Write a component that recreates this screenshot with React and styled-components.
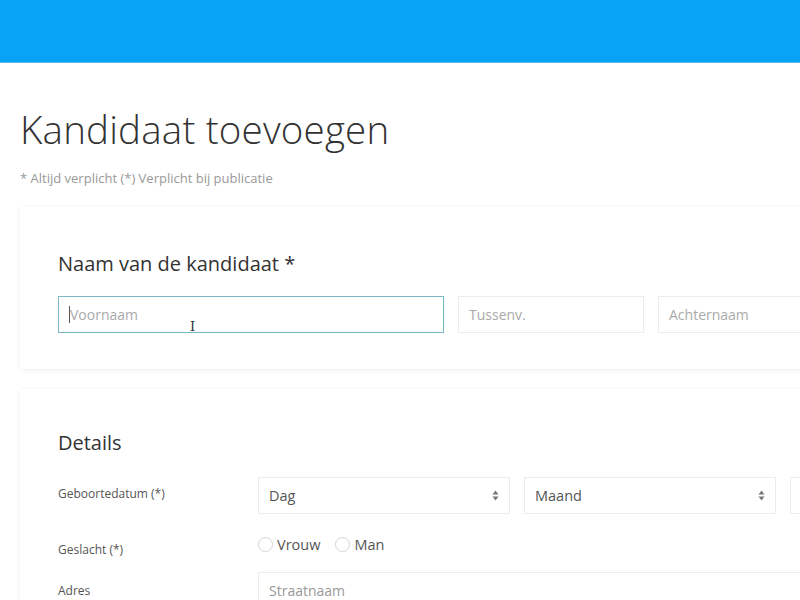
import React from 'react';
import styled, { createGlobalStyle } from 'styled-components';

const GlobalStyle = createGlobalStyle`
  html, body {
    margin: 0;
    padding: 0;
    background: #fff;
    overflow: hidden;
    font-family: "Open Sans", "Noto Sans", sans-serif;
    color: #333;
  }
`;

const TopBar = styled.header`
  height: 62px;
  background: #08a2f7;
  border-bottom: 1px solid #5db8e6;
`;

const Page = styled.main`
  width: 1000px;
  padding: 0 0 0 20px;
`;

const Title = styled.h1`
  margin: 40px 0 0;
  font-size: 38.5px;
  font-weight: 300;
  line-height: 52px;
  color: #333;
  letter-spacing: 0.2px;
`;

const Note = styled.p`
  margin: 14px 0 0;
  font-size: 13px;
  line-height: 18px;
  color: #999;
`;

const Card = styled.section`
  margin-top: ${p => p.$top}px;
  width: 900px;
  background: #fff;
  box-shadow: 0 1px 5px rgba(0, 0, 0, 0.07);
  padding: ${p => p.$pad};
`;

const CardTitle = styled.h2`
  margin: 0 0 ${p => p.$mb}px;
  font-size: 20px;
  font-weight: 400;
  line-height: 28px;
  color: #333;
`;

const NameRow = styled.div`
  display: grid;
  grid-template-columns: 386px 186px 186px;
  gap: 14px;
`;

const TextInput = styled.div`
  box-sizing: border-box;
  height: 37px;
  border: 1px solid ${p => (p.$focus ? '#79b8c4' : '#ececec')};
  display: flex;
  align-items: center;
  padding: 0 10px;
  font-size: 14px;
  color: #aaa;
  position: relative;
`;

const Caret = styled.span`
  width: 1px;
  height: 17px;
  background: #555;
`;

const Cursor = styled.span`
  position: absolute;
  left: 131px;
  top: 23px;
  font-family: "DejaVu Serif", serif;
  font-size: 13px;
  color: #333;
  line-height: 13px;
`;

const FormRow = styled.div`
  display: grid;
  grid-template-columns: 200px 1fr;
  align-items: start;
  margin-top: ${p => p.$mt}px;
`;

const Label = styled.div`
  font-size: 12px;
  color: #555;
  padding-top: ${p => p.$pt}px;
`;

const Selects = styled.div`
  display: grid;
  grid-template-columns: 252px 252px 252px;
  gap: 14px;
`;

const Select = styled.div`
  box-sizing: border-box;
  height: 37px;
  border: 1px solid #ececec;
  display: flex;
  align-items: center;
  justify-content: space-between;
  padding: 0 10px;
  font-size: 14.5px;
  color: #555;
`;

const Radios = styled.div`
  display: flex;
  gap: 15px;
  align-items: center;
`;

const RadioItem = styled.label`
  display: flex;
  align-items: center;
  gap: 4px;
  font-size: 14.5px;
  color: #555;
`;

const Circle = styled.span`
  box-sizing: border-box;
  width: 15px;
  height: 15px;
  border-radius: 50%;
  border: 1px solid #d4d4d4;
`;

const Wide = styled(TextInput)`
  width: 760px;
  color: #999;
`;

const Arrows = () => (
  <svg width="7" height="11" viewBox="0 0 7 11">
    <path d="M3.5 0.5 L6.5 4.5 H0.5 Z" fill="#777" />
    <path d="M3.5 10.5 L6.5 6.5 H0.5 Z" fill="#777" />
  </svg>
);

export default function App() {
  return (
    <>
      <GlobalStyle />
      <TopBar />
      <Page>
        <Title>Kandidaat toevoegen</Title>
        <Note>* Altijd verplicht (*) Verplicht bij publicatie</Note>

        <Card $top={20} $pad="43px 38px 36px">
          <CardTitle $mb={18}>Naam van de kandidaat *</CardTitle>
          <NameRow>
            <TextInput $focus>
              <Caret />Voornaam
              <Cursor>I</Cursor>
            </TextInput>
            <TextInput>Tussenv.</TextInput>
            <TextInput>Achternaam</TextInput>
          </NameRow>
        </Card>

        <Card $top={20} $pad="40px 38px 30px">
          <CardTitle $mb={20}>Details</CardTitle>
          <FormRow $mt={0}>
            <Label $pt={8}>Geboortedatum (*)</Label>
            <Selects>
              <Select>Dag<Arrows /></Select>
              <Select>Maand<Arrows /></Select>
              <Select aria-label="Jaar" />
            </Selects>
          </FormRow>
          <FormRow $mt={21}>
            <Label $pt={6}>Geslacht (*)</Label>
            <Radios>
              <RadioItem><Circle />Vrouw</RadioItem>
              <RadioItem><Circle />Man</RadioItem>
            </Radios>
          </FormRow>
          <FormRow $mt={14}>
            <Label $pt={10}>Adres</Label>
            <Wide>Straatnaam</Wide>
          </FormRow>
        </Card>
      </Page>
    </>
  );
}
